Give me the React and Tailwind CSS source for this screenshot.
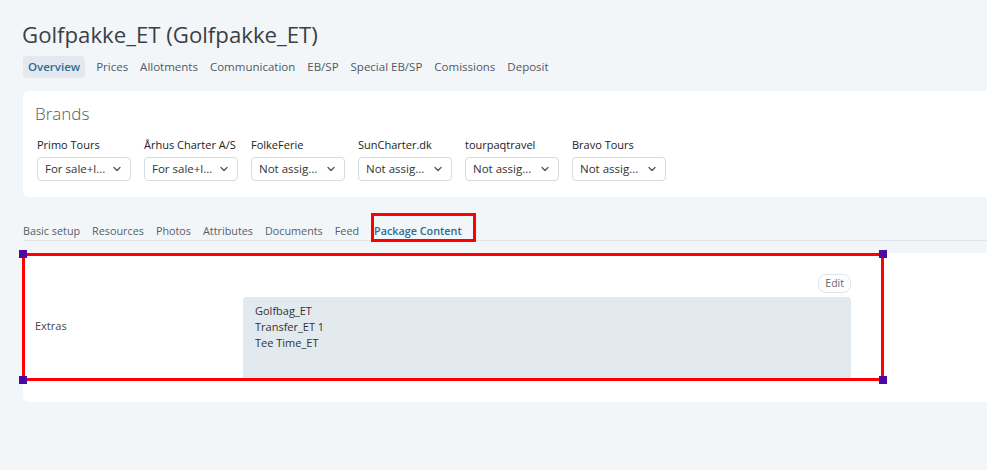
import React from 'react';

const MAIN_TABS = ['Overview', 'Prices', 'Allotments', 'Communication', 'EB/SP', 'Special EB/SP', 'Comissions', 'Deposit'];

const BRANDS = [
  { name: 'Primo Tours', value: 'For sale+l...' },
  { name: 'Århus Charter A/S', value: 'For sale+l...' },
  { name: 'FolkeFerie', value: 'Not assig...' },
  { name: 'SunCharter.dk', value: 'Not assig...' },
  { name: 'tourpaqtravel', value: 'Not assig...' },
  { name: 'Bravo Tours', value: 'Not assig...' },
];

const SUB_TABS = ['Basic setup', 'Resources', 'Photos', 'Attributes', 'Documents', 'Feed', 'Package Content'];

const EXTRAS = ['Golfbag_ET', 'Transfer_ET 1', 'Tee Time_ET'];

function Chevron() {
  return (
    <svg width="8" height="6" viewBox="0 0 8 6" fill="none">
      <path d="M1 1.5 L4 4.5 L7 1.5" stroke="#555" strokeWidth="1.3" strokeLinecap="round" strokeLinejoin="round" />
    </svg>
  );
}

function Handle({ className }) {
  return <div className={`absolute w-[8px] h-[8px] bg-[#4b0aa3] ${className}`} />;
}

export default function App() {
  return (
    <div className="min-h-screen bg-[#f3f6f9] pl-[23px] pt-[20px] pb-10 font-['Open_Sans',sans-serif] text-[#333]">
      <h1 className="text-[22.2px] leading-[30px] text-[#3b4046] -ml-[1px]">Golfpakke_ET (Golfpakke_ET)</h1>

      <nav className="flex mt-[6px]">
        {MAIN_TABS.map((tab, i) => (
          <div
            key={tab}
            className={
              i === 0
                ? 'px-[5px] mr-[5px] h-[22px] flex items-center rounded-[4px] bg-[#e3e9ef] text-[11.5px] font-semibold text-[#2e6b94]'
                : 'px-[6px] h-[22px] flex items-center text-[11.5px] text-[#4e5963]'
            }
          >
            {tab}
          </div>
        ))}
      </nav>

      <section className="mt-[13px] bg-white rounded-l-[6px] pl-[12px] pt-[11px] pb-[16px]">
        <h2 className="text-[17px] leading-[24px] text-[#555b61] font-light">Brands</h2>
        <div className="flex gap-[13px] mt-[11px] pl-[2px]">
          {BRANDS.map((b) => (
            <div key={b.name} className="w-[94px]">
              <div className="text-[11px] leading-[16px] text-[#222] whitespace-nowrap">{b.name}</div>
              <div className="mt-[4px] h-[24px] border border-[#d5dbe0] rounded-[4px] flex items-center justify-between pl-[7px] pr-[9px]">
                <span className="text-[11.5px] text-[#333]">{b.value}</span>
                <Chevron />
              </div>
            </div>
          ))}
        </div>
      </section>

      <div className="mt-[24px] flex gap-[12px] border-b border-[#dee4ea] h-[20px]">
        {SUB_TABS.map((tab, i) =>
          i === SUB_TABS.length - 1 ? (
            <div key={tab} className="relative ml-[3px] text-[10.8px] leading-[19px] font-semibold text-[#2e6b94]">
              {tab}
              <div className="absolute -left-[3px] -top-[8px] w-[105px] h-[29px] border-[3px] border-[#ff0000]" />
            </div>
          ) : (
            <div key={tab} className="text-[10.8px] leading-[19px] text-[#555f69]">
              {tab}
            </div>
          )
        )}
      </div>

      <section className="relative mt-[12px] bg-white rounded-l-[6px] pt-[21px] pb-[23px]">
        <div className="flex items-center">
          <div className="w-[220px] pl-[12px] text-[11px] text-[#444]">Extras</div>
          <div className="w-[608px] flex flex-col items-end">
            <button className="h-[19px] px-[6px] rounded-[8px] border border-[#dde5ea] bg-white text-[10.5px] text-[#666]">
              Edit
            </button>
            <div className="mt-[4px] w-full h-[82px] bg-[#e2e9ef] rounded-t-[4px] pl-[12px] pt-[6px]">
              {EXTRAS.map((e) => (
                <div key={e} className="text-[11px] leading-[16px] text-[#333]">
                  {e}
                </div>
              ))}
            </div>
          </div>
        </div>

        <div className="absolute -left-[1px] top-0 w-[862px] h-[128px] border-[3px] border-[#ff0000]">
          <Handle className="-left-[6px] -top-[6px]" />
          <Handle className="-right-[6px] -top-[6px]" />
          <Handle className="-left-[6px] -bottom-[6px]" />
          <Handle className="-right-[6px] -bottom-[6px]" />
        </div>
      </section>
    </div>
  );
}
